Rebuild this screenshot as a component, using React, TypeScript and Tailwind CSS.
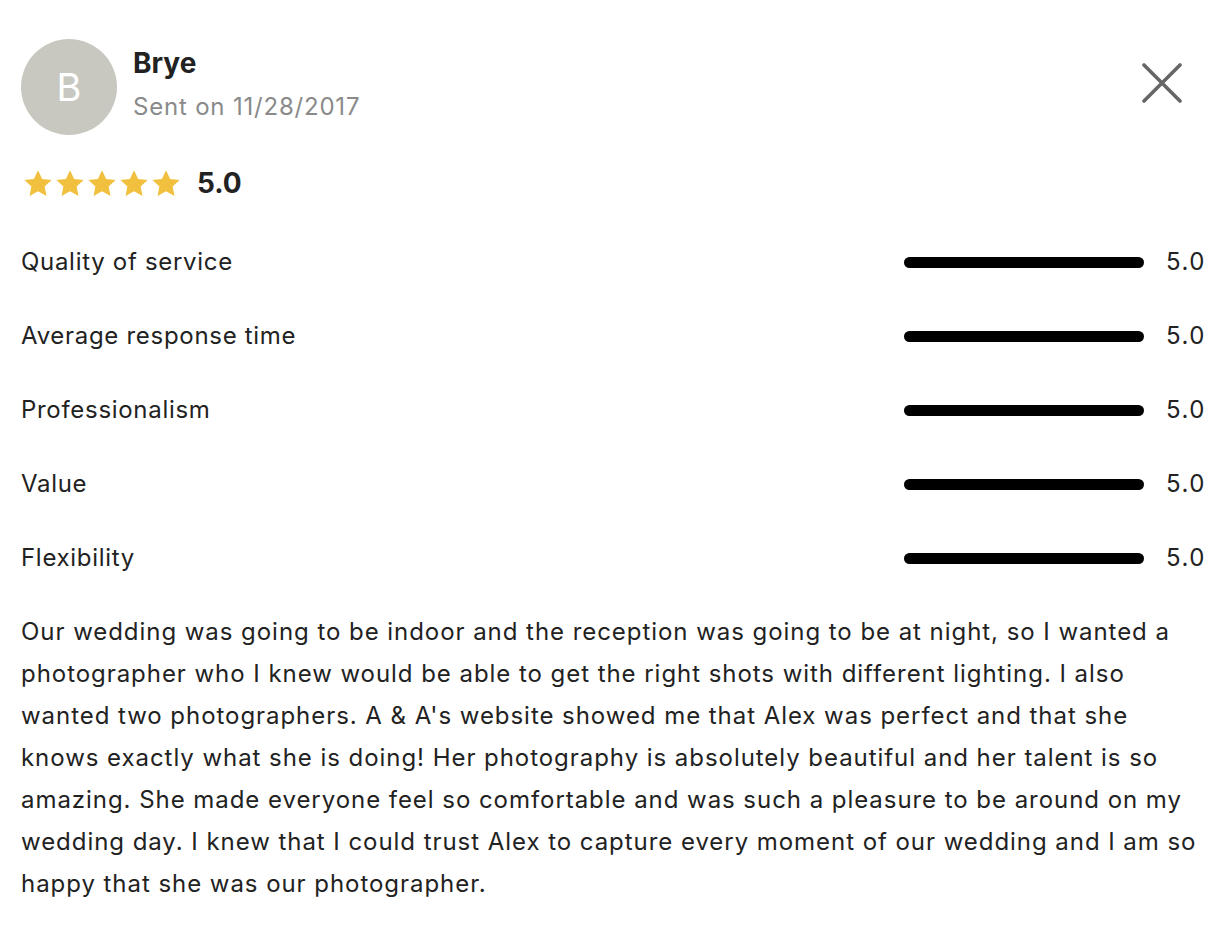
import React from "react";

const Star = () => (
  <svg width="30" height="29" viewBox="0 0 24 23" className="block">
    <path d="M12 0.8l3.3 7 7.6.9-5.6 5.2 1.5 7.5L12 17.6l-6.8 3.8 1.5-7.5L1.1 8.7l7.6-.9z" fill="#F2C03F" />
  </svg>
);

const rows = ["Quality of service", "Average response time", "Professionalism", "Value", "Flexibility"];

export default function App() {
  return (
    <div className="bg-white min-h-[932px] w-[1230px] pl-[21px] pr-[26px] pt-[39px] text-[#222222] tracking-[0.7px]" style={{ fontFamily: "Inter, 'Noto Sans', sans-serif" }}>
      <div className="flex items-start">
        <div className="w-[96px] h-[96px] rounded-full bg-[#C8C8C0] flex items-center justify-center text-white text-[38px] tracking-normal">B</div>
        <div className="ml-[16px] flex flex-col">
          <div className="text-[28px] font-bold leading-[34px] mt-[7px] tracking-normal">Brye</div>
          <div className="text-[24px] text-[#8A8A8A] leading-[30px] mt-[12px] tracking-[0.8px]">Sent on 11/28/2017</div>
        </div>
        <div className="ml-auto mt-[24px] mr-[22px]">
          <svg width="40" height="40" viewBox="0 0 40 40">
            <path d="M2 2L38 38M38 2L2 38" stroke="#666666" strokeWidth="3.6" strokeLinecap="round" />
          </svg>
        </div>
      </div>
      <div className="flex items-center mt-[31px]">
        <div className="flex gap-[2px] ml-[2px]">
          <Star /><Star /><Star /><Star /><Star />
        </div>
        <div className="ml-[16px] text-[28px] font-bold leading-[34px] tracking-normal">5.0</div>
      </div>
      <div className="mt-[45px] flex flex-col gap-[40px]">
        {rows.map((r) => (
          <div key={r} className="flex items-center h-[34px]">
            <div className="text-[24px] leading-[34px]">{r}</div>
            <div className="ml-auto w-[240px] h-[11px] rounded-full bg-black" />
            <div className="ml-[22px] text-[24px] leading-[34px] w-[39px] text-right tracking-[1.5px] -mr-[1px]">5.0</div>
          </div>
        ))}
      </div>
      <p className="mt-[36px] text-[24px] leading-[42px] tracking-[0.95px]">
        Our wedding was going to be indoor and the reception was going to be at night, so I wanted a photographer who I knew would be able to get the right shots with different lighting. I also wanted two photographers. A &amp; A's website showed me that Alex was perfect and that she knows exactly what she is doing! Her photography is absolutely beautiful and her talent is so amazing. She made everyone feel so comfortable and was such a pleasure to be around on my wedding day. I knew that I could trust Alex to capture every moment of our wedding and I am so happy that she was our photographer.
      </p>
    </div>
  );
}
